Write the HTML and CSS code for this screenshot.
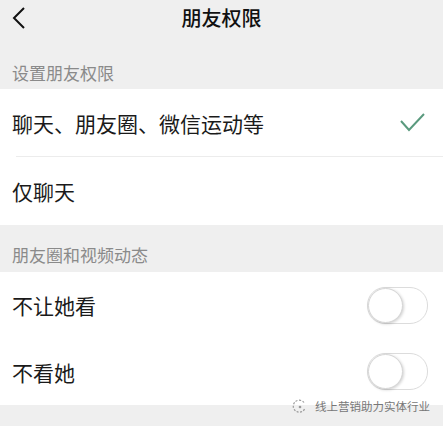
FILE: index.html
```html
<!DOCTYPE html>
<html lang="zh-CN">
<head>
  <meta charset="UTF-8" />
  <meta name="viewport" content="width=device-width, initial-scale=1" />
  <title>朋友权限</title>
  <link rel="stylesheet" href="styles.css">
</head>
<body>
  <div class="page">
    <div class="navbar">
      <svg class="back" width="14" height="22" viewBox="0 0 14 22">
        <polyline points="12,1 2,11 12,21" fill="none" stroke="#111" stroke-width="2" />
      </svg>
      <div class="title">朋友权限</div>
    </div>

    <div class="section-title first">设置朋友权限</div>
    <div class="group">
      <div class="row">
        <span>聊天、朋友圈、微信运动等</span>
        <svg class="check" width="25" height="19" viewBox="0 0 25 19">
          <polyline points="1,8 9,17 24,1" fill="none" stroke="#5a9a7e" stroke-width="2" />
        </svg>
      </div>
      <div class="divider"></div>
      <div class="row">
        <span>仅聊天</span>
      </div>
    </div>

    <div class="section-title">朋友圈和视频动态</div>
    <div class="group">
      <div class="row switch-row">
        <span>不让她看</span>
        <div class="switch"><div class="knob"></div></div>
      </div>
      <div class="row switch-row">
        <span>不看她</span>
        <div class="switch"><div class="knob"></div></div>
      </div>
    </div>

    <div class="watermark">
      <svg width="15" height="15" viewBox="0 0 15 15">
        <path d="M12 3.5 A6 6 0 1 0 13 9" fill="none" stroke="#999" stroke-width="1.2" stroke-dasharray="2 1.5" />
        <circle cx="8" cy="8" r="1.3" fill="#999" />
      </svg>
      <span>线上营销助力实体行业</span>
    </div>
  </div>
</body>
</html>
```

FILE: styles.css
```css
body {
  margin: 0;
  background-color: #efefef;
  font-family: "Noto Sans CJK SC", "Noto Sans", sans-serif;
  color: #1a1a1a;
}

.page {
  position: relative;
  width: 443px;
  height: 426px;
  overflow: hidden;
}

.navbar {
  position: relative;
  height: 38px;
  display: flex;
  align-items: center;
  justify-content: center;
}

.navbar .back {
  position: absolute;
  left: 12px;
  top: 7px;
}

.title {
  font-size: 20px;
  font-weight: 500;
  line-height: 26px;
  margin-top: -2px;
  color: #111;
}

.section-title {
  font-size: 17px;
  line-height: 24px;
  color: #8a8a8a;
  padding: 18px 12px 5px;
}

.section-title.first {
  padding-top: 23px;
  padding-bottom: 4px;
}

.group {
  background: #fff;
}

.row {
  height: 67px;
  display: flex;
  align-items: center;
  justify-content: space-between;
  padding: 0 18px 0 12px;
  font-size: 21px;
}

.row + .divider + .row {
  height: 68px;
}

.divider {
  height: 1px;
  margin-left: 16px;
  background: #ececec;
}

.switch-row {
  height: 66px;
  padding-right: 15px;
}

.switch-row + .switch-row {
  height: 67px;
}

.switch {
  width: 59px;
  height: 35px;
  border: 1px solid #dcdcdc;
  border-radius: 18px;
  background: #fff;
  position: relative;
  box-sizing: content-box;
}

.knob {
  width: 33px;
  height: 33px;
  border-radius: 50%;
  background: #fff;
  border: 1px solid #d6d6d6;
  box-shadow: 1px 1px 3px rgba(0, 0, 0, 0.18);
  position: absolute;
  left: 0;
  top: 0;
}

.watermark {
  position: absolute;
  right: 13px;
  top: 398px;
  display: flex;
  align-items: center;
  gap: 8px;
  font-size: 11.5px;
  color: #777;
}
```
